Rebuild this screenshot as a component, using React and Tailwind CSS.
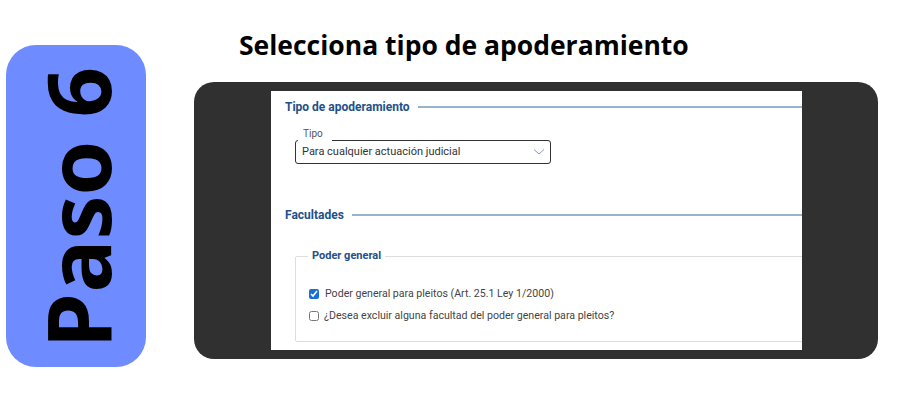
import React from "react";

export default function App() {
  return (
    <div className="w-[900px] h-[400px] bg-white flex overflow-hidden">
      <div className="ml-[6px] mt-[45px] w-[140px] h-[322px] shrink-0 rounded-[30px] bg-[#6e8bff] flex items-center justify-center">
        <span className="[writing-mode:vertical-rl] rotate-180 font-['Open_Sans',sans-serif] font-bold text-[88.5px] leading-none text-black whitespace-nowrap pb-[3px] pr-[3px]">
          Paso 6
        </span>
      </div>
      <div className="ml-[48px] flex flex-col">
        <h1 className="ml-[45px] mt-[30px] h-[30px] font-['Open_Sans',sans-serif] font-bold text-[26.5px] leading-[30px] text-black whitespace-nowrap">
          Selecciona tipo de apoderamiento
        </h1>
        <div className="mt-[22px] w-[684px] h-[277px] rounded-[20px] bg-[#303030] pl-[77px] pt-[9px]">
          <div className="w-[531px] h-[259px] bg-white overflow-hidden font-['Roboto',sans-serif]">
            <div className="pl-[14px] pt-[7px]">
              <div className="flex items-center gap-[8px]">
                <span className="text-[12px] font-bold text-[#23508a] whitespace-nowrap">Tipo de apoderamiento</span>
                <div className="flex-1 h-[2px] bg-[#98b4cc]"></div>
              </div>
              <div className="mt-[24px] ml-[10px] w-[256px] h-[24px] border border-[#333] rounded-[3px] pl-[6px] pr-[5px] relative flex items-center justify-between">
                <span className="absolute top-[-14px] left-[2px] h-[15px] bg-white pl-[5px] pr-[9px] text-[10px] leading-[14px] text-[#555]">Tipo</span>
                <span className="text-[11px] text-[#333] whitespace-nowrap">Para cualquier actuación judicial</span>
                <svg width="12" height="8" viewBox="0 0 12 8">
                  <polyline points="1,1.5 6,6 11,1.5" fill="none" stroke="#8c9aab" strokeWidth="1" />
                </svg>
              </div>
              <div className="mt-[42px] flex items-center gap-[8px]">
                <span className="text-[12px] font-bold text-[#23508a] whitespace-nowrap">Facultades</span>
                <div className="flex-1 h-[2px] bg-[#98b4cc]"></div>
              </div>
              <fieldset className="mt-[26px] ml-[10px] w-[560px] h-[92px] border border-[#dddddd] rounded-[2px] px-[13px]">
                <legend className="text-[11px] leading-[12px] font-bold text-[#23508a] px-[4px] -ml-[1px]">Poder general</legend>
                <div className="mt-[25px] flex items-center gap-[6px] h-[14px]">
                  <input type="checkbox" defaultChecked className="w-[10px] h-[10px] m-0 accent-[#1a6fd6]" />
                  <span className="text-[10.6px] text-[#444] whitespace-nowrap">Poder general para pleitos (Art. 25.1 Ley 1/2000)</span>
                </div>
                <div className="mt-[8px] flex items-center gap-[5px] h-[14px]">
                  <input type="checkbox" className="w-[10px] h-[10px] m-0" />
                  <span className="text-[10.6px] text-[#444] whitespace-nowrap">¿Desea excluir alguna facultad del poder general para pleitos?</span>
                </div>
              </fieldset>
            </div>
          </div>
        </div>
      </div>
    </div>
  );
}
